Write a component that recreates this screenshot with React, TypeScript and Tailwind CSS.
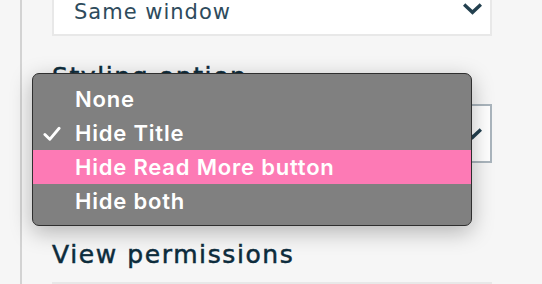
import React from "react";

function Chevron({ className }: { className?: string }) {
  return (
    <svg viewBox="0 0 20 12" className={className} fill="none">
      <path d="M2.5 2.5 L10 9.5 L17.5 2.5" stroke="#23404f" strokeWidth="3.6" strokeLinecap="square" />
    </svg>
  );
}

export default function App() {
  const items = ["None", "Hide Title", "Hide Read More button", "Hide both"];
  return (
    <div className="relative w-[542px] h-[284px] overflow-hidden bg-[#f6f6f6] font-['DejaVu_Sans',sans-serif]">
      <div className="flex h-full">
        <div className="w-[20px] shrink-0" />
        <div className="flex-1 border-l-2 border-[#d3d3d3] pl-[30px] pr-[50px]">
          <div className="mt-[-22px] flex h-[58px] items-start justify-between border-2 border-[#e8e8e8] bg-white pl-[20px] pr-[8px] pt-[20px]">
            <span className="text-[21px] leading-[24px] tracking-[1px] text-[#2e4b5c]">Same window</span>
            <Chevron className="mt-[3px] w-[19px] h-[12px]" />
          </div>
          <div className="mt-[26px] text-[25px] leading-[30px] tracking-[1.6px] text-[#0d2c3c] [-webkit-text-stroke:0.5px_#0d2c3c]">Styling option</div>
          <div className="mt-[12px] flex h-[59px] items-center justify-end border-2 border-[#aab5bd] bg-white pr-[8px]">
            <Chevron className="w-[19px] h-[12px]" />
          </div>
          <div className="mt-[77px] text-[25px] leading-[30px] tracking-[1.6px] text-[#0d2c3c] [-webkit-text-stroke:0.5px_#0d2c3c]">View permissions</div>
          <div className="mt-[12px] h-[40px] border-2 border-[#e8e8e8] bg-white" />
        </div>
      </div>

      <div className="absolute left-[32px] top-[73px] w-[440px] h-[153px] rounded-[7px] border border-[#2f2f2f] bg-[#808080] pt-[8px] shadow-[0_6px_22px_rgba(0,0,0,0.28)] font-['Inter',sans-serif]">
        {items.map((t) => (
          <div
            key={t}
            className={
              "relative flex h-[34px] items-center pl-[42px] text-[22px] font-semibold tracking-[0.8px] text-white " +
              (t === "Hide Read More button" ? "bg-[#fd7ab5]" : "")
            }
          >
            {t === "Hide Title" && (
              <svg viewBox="0 0 20 18" className="absolute left-[10px] top-[10px] w-[18px] h-[16px]" fill="none">
                <path d="M2 9.5 L7.5 15 L18 2.5" stroke="white" strokeWidth="3.2" strokeLinecap="round" strokeLinejoin="round" />
              </svg>
            )}
            {t}
          </div>
        ))}
      </div>
    </div>
  );
}
